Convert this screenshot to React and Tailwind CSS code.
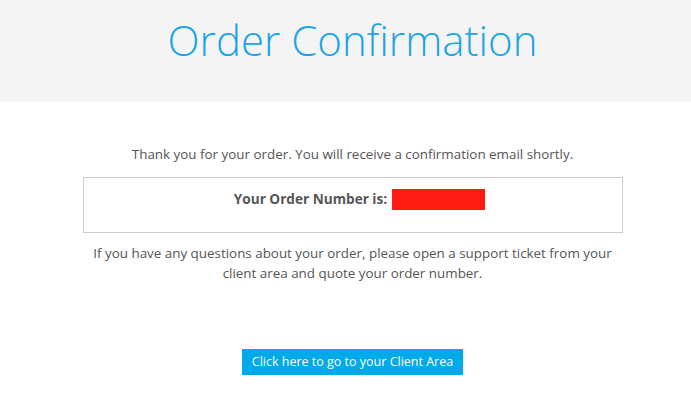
export default function App() {
  return (
    <div className="w-[691px] h-[416px] bg-white overflow-hidden" style={{ fontFamily: '"Open Sans", sans-serif' }}>
      <div className="h-[102px] bg-[#f4f4f4] flex justify-center pl-[14px]">
        <h1 className="mt-[14px] text-[42px] leading-[52px] font-light text-[#1ba4e6]">Order Confirmation</h1>
      </div>
      <div className="flex flex-col items-center pl-[14px] text-[13.4px] text-[#555555]">
        <p className="mt-[42px] leading-[20px]">Thank you for your order. You will receive a confirmation email shortly.</p>
        <div className="mt-[13px] w-[540px] h-[56px] border border-[#cccccc] flex justify-center pt-[11px]">
          <div className="flex items-start pl-[14px] font-bold text-[13.6px] leading-[20px]">
            <span>Your Order Number is:</span>
            <span className="ml-[5px] w-[93px] h-[21px] bg-[#ff1a12]"></span>
          </div>
        </div>
        <p className="mt-[10px] w-[540px] text-center leading-[20px]">If you have any questions about your order, please open a support ticket from your client area and quote your order number.</p>
        <button className="mt-[66px] h-[26px] px-[10px] bg-[#00aae8] text-white text-[12.5px] leading-[20px]">Click here to go to your Client Area</button>
      </div>
    </div>
  );
}
